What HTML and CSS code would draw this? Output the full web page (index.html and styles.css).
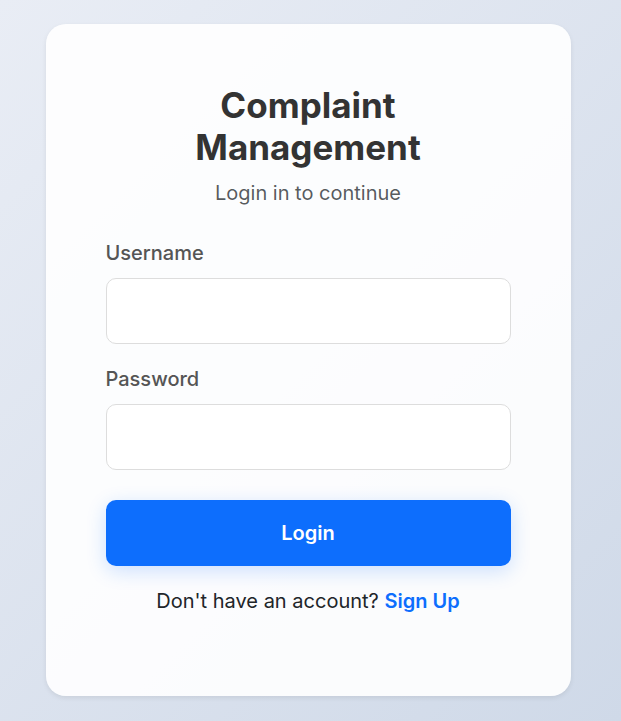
FILE: index.html
```html
<!DOCTYPE html>
<html lang="en">
<head>
<meta charset="utf-8">
<meta name="viewport" content="width=device-width, initial-scale=1">
<title>Complaint Management</title>
<link rel="stylesheet" href="styles.css">
</head>
<body>
<main class="card">
  <h1 class="title">Complaint Management</h1>
  <p class="subtitle">Login in to continue</p>
  <form class="form">
    <div class="field">
      <label for="username">Username</label>
      <input id="username" type="text">
    </div>
    <div class="field">
      <label for="password">Password</label>
      <input id="password" type="password">
    </div>
    <button class="submit" type="submit">Login</button>
  </form>
  <p class="signup">Don't have an account? <a href="#">Sign Up</a></p>
</main>
</body>
</html>
```
FILE: styles.css
```css
* {
  box-sizing: border-box;
}

body {
  margin: 0;
  min-height: 100vh;
  padding: 24px;
  display: flex;
  align-items: flex-start;
  justify-content: center;
  background: linear-gradient(135deg, #e9edf5, #cfd9e8);
  color: #212529;
  font: 20px/30px Inter, "Liberation Sans", sans-serif;
}

.card {
  width: 100%;
  max-width: 525px;
  margin-right: 5px;
  padding: 60px 60px 80px;
  border-radius: 20px;
  background: rgba(255, 255, 255, 0.9);
  box-shadow: 0 2px 5px rgba(0, 0, 0, 0.08);
}

.title {
  margin: 0 0 10px;
  color: #333;
  font-size: 35px;
  font-weight: 700;
  line-height: 42px;
  text-align: center;
}

.subtitle {
  margin: 0 0 30px;
  color: rgba(33, 37, 41, 0.75);
  text-align: center;
}

.field {
  margin-bottom: 20px;
}

.field label {
  display: block;
  margin-bottom: 10px;
  color: #555;
  font-weight: 500;
}

.field input {
  display: block;
  width: 100%;
  height: 66px;
  padding: 16px 20px;
  border: 1px solid #ddd;
  border-radius: 10px;
  background: #fff;
  font: inherit;
}

.submit {
  display: block;
  width: 100%;
  height: 66px;
  margin-top: 30px;
  border: 0;
  border-radius: 10px;
  background: #0d6efd;
  box-shadow: 0 5px 20px rgba(13, 110, 253, 0.2);
  color: #fff;
  font: inherit;
  font-weight: 600;
  cursor: pointer;
}

.signup {
  margin: 20px 0 0;
  text-align: center;
}

.signup a {
  color: #0d6efd;
  font-weight: 600;
  text-decoration: none;
}
```
